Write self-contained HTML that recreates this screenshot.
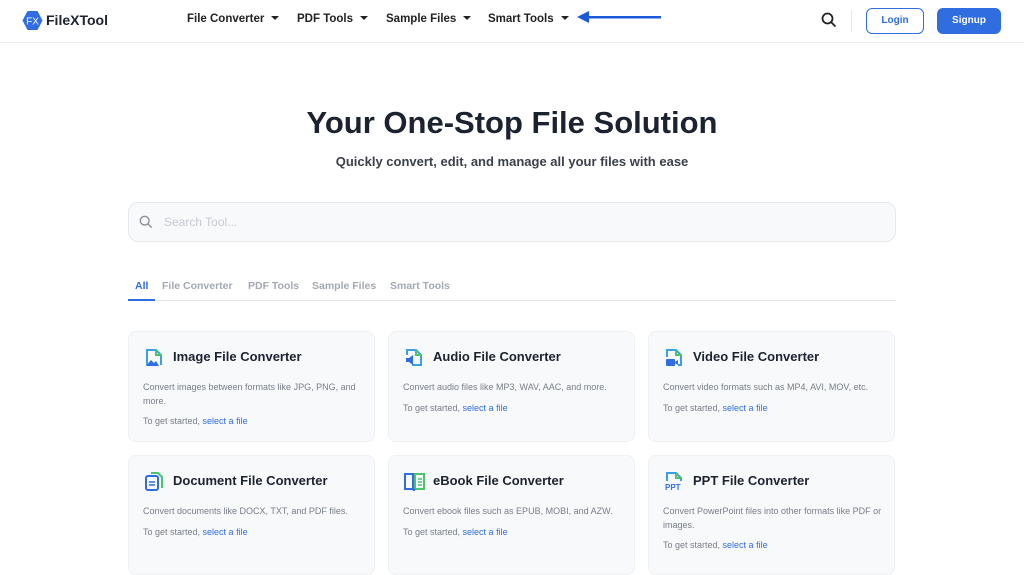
<!DOCTYPE html>
<html><head><meta charset="utf-8"><style>
*{box-sizing:border-box;margin:0;padding:0}
body{width:1024px;height:570px;overflow:hidden;background:#fff;font-family:"Liberation Sans",sans-serif;color:#1d2230;position:relative}
.hdr{position:absolute;left:0;top:0;width:1024px;height:43px;border-bottom:1px solid #eceef2}
.abs{position:absolute}
.nav{font-size:11.5px;font-weight:bold;color:#222;top:13px}
.nav:after{content:"";display:inline-block;margin-left:7px;border-left:4px solid transparent;border-right:4px solid transparent;border-top:4px solid #222;vertical-align:2px}
.card{position:absolute;width:247px;background:#f8f9fb;border:1px solid #eef0f3;border-radius:8px}
.card h3{position:absolute;left:44px;top:17px;font-size:13px;font-weight:bold;color:#1d2230}
.card .ic{position:absolute;left:15px;top:15px}
.card p{position:absolute;left:14px;top:49px;width:225px;font-size:9px;line-height:13.5px;color:#777d88}
.card .gs{position:absolute;left:14px;font-size:9px;color:#777d88}
.card .gs span{color:#2f6de1}
.tab{position:absolute;top:280px;font-size:10.5px;font-weight:bold;color:#a3a8b2}
</style></head><body>
<div class="hdr"></div>
<svg class="abs" style="left:22px;top:10px" width="21" height="21" viewBox="0 0 21 21"><polygon points="5.5,1 15.5,1 20.5,10.5 15.5,20 5.5,20 0.5,10.5" fill="#2f6de1"/><text x="10.5" y="14.5" font-size="10" fill="#fff" text-anchor="middle" font-family="Liberation Sans">FX</text></svg>
<div class="abs" style="left:46px;top:12px;font-size:14px;font-weight:bold;color:#1d2230">FileXTool</div>
<div class="abs nav" style="left:187px">File Converter</div>
<div class="abs nav" style="left:297px">PDF Tools</div>
<div class="abs nav" style="left:386px">Sample Files</div>
<div class="abs nav" style="left:488px">Smart Tools</div>
<svg class="abs" style="left:575px;top:9px" width="88" height="18"><polygon points="2,8 14,2 14,14" fill="#1a5ad8"/><rect x="12" y="7" width="74" height="2.5" fill="#1a5ad8"/></svg>
<svg class="abs" style="left:821px;top:12px" width="16" height="16" viewBox="0 0 16 16"><circle cx="6.5" cy="6.5" r="5" fill="none" stroke="#222" stroke-width="1.8"/><line x1="10.2" y1="10.2" x2="14.5" y2="14.5" stroke="#222" stroke-width="1.8"/></svg>
<div class="abs" style="left:851px;top:10px;width:1px;height:22px;background:#e3e5e9"></div>
<div class="abs" style="left:866px;top:8px;width:58px;height:26px;border:1px solid #2f6de1;border-radius:6px;color:#2f6de1;font-size:10px;font-weight:bold;text-align:center;line-height:24px">Login</div>
<div class="abs" style="left:937px;top:8px;width:64px;height:26px;background:#2f6de1;border-radius:6px;color:#fff;font-size:10px;font-weight:bold;text-align:center;line-height:26px">Signup</div>

<div class="abs" style="left:0;width:1024px;top:105px;text-align:center;font-size:31px;font-weight:bold;color:#1d2230">Your One-Stop File Solution</div>
<div class="abs" style="left:0;width:1024px;top:154px;text-align:center;font-size:13px;font-weight:bold;color:#3a3f4a">Quickly convert, edit, and manage all your files with ease</div>

<div class="abs" style="left:128px;top:202px;width:768px;height:40px;background:#f8f9fb;border:1px solid #e6e8ec;border-radius:10px"></div>
<svg class="abs" style="left:139px;top:215px" width="14" height="14" viewBox="0 0 16 16"><circle cx="6.5" cy="6.5" r="5" fill="none" stroke="#8a8f99" stroke-width="1.6"/><line x1="10.2" y1="10.2" x2="14.5" y2="14.5" stroke="#8a8f99" stroke-width="1.6"/></svg>
<div class="abs" style="left:164px;top:215px;font-size:12px;color:#c5c9d0">Search Tool...</div>

<div class="tab" style="left:135px;color:#2f6de1">All</div>
<div class="tab" style="left:162px">File Converter</div>
<div class="tab" style="left:248px">PDF Tools</div>
<div class="tab" style="left:312px">Sample Files</div>
<div class="tab" style="left:390px">Smart Tools</div>
<div class="abs" style="left:128px;top:300px;width:768px;height:1px;background:#e3e5e9"></div>
<div class="abs" style="left:128px;top:299px;width:27px;height:2px;background:#2f6de1"></div>

<div class="card" style="left:128px;top:331px;height:111px">
<svg class="ic" width="20" height="20" viewBox="0 0 20 20"><path d="M3 18V3h9l5 5v10" fill="none" stroke="#3aa0e6" stroke-width="2"/><path d="M12 3v5h5" fill="none" stroke="#4bc46a" stroke-width="2"/><path d="M2 19l5-6 3 3 2-2 3 5z" fill="#2f6de1"/></svg>
<h3>Image File Converter</h3><p>Convert images between formats like JPG, PNG, and more.</p><div class="gs" style="top:84px">To get started, <span>select a file</span></div></div>
<div class="card" style="left:388px;top:331px;height:111px">
<svg class="ic" width="20" height="20" viewBox="0 0 20 20"><path d="M3 8V3h9l5 5v10H8" fill="none" stroke="#3aa0e6" stroke-width="2"/><path d="M12 3v5h5" fill="none" stroke="#4bc46a" stroke-width="2"/><path d="M2 11h3l4-3v10l-4-3H2z" fill="#2f6de1"/></svg>
<h3>Audio File Converter</h3><p>Convert audio files like MP3, WAV, AAC, and more.</p><div class="gs" style="top:71px">To get started, <span>select a file</span></div></div>
<div class="card" style="left:648px;top:331px;height:111px">
<svg class="ic" width="20" height="20" viewBox="0 0 20 20"><path d="M3 10V3h9l5 5v10h-3" fill="none" stroke="#3aa0e6" stroke-width="2"/><path d="M12 3v5h5" fill="none" stroke="#4bc46a" stroke-width="2"/><rect x="2" y="12" width="9" height="7" rx="1" fill="#2f6de1"/><path d="M11 15l3-2v5l-3-2z" fill="#2f6de1"/></svg>
<h3>Video File Converter</h3><p>Convert video formats such as MP4, AVI, MOV, etc.</p><div class="gs" style="top:71px">To get started, <span>select a file</span></div></div>

<div class="card" style="left:128px;top:455px;height:120px">
<svg class="ic" width="20" height="20" viewBox="0 0 20 20"><path d="M7 2h7l4 4v11" fill="none" stroke="#4bc46a" stroke-width="2"/><rect x="2" y="5" width="12" height="14" rx="2" fill="none" stroke="#2f6de1" stroke-width="2"/><path d="M5 11h6M5 14h6" stroke="#2f6de1" stroke-width="1.6"/></svg>
<h3>Document File Converter</h3><p>Convert documents like DOCX, TXT, and PDF files.</p><div class="gs" style="top:71px">To get started, <span>select a file</span></div></div>
<div class="card" style="left:388px;top:455px;height:120px">
<svg class="ic" width="22" height="20" viewBox="0 0 22 20"><path d="M1 3h8v15H1z" fill="none" stroke="#2f6de1" stroke-width="2"/><path d="M11 3h9v15h-9z" fill="none" stroke="#4bc46a" stroke-width="2"/><path d="M14 8h4M14 11h4M14 14h4" stroke="#4bc46a" stroke-width="1.5"/><path d="M9 18l1 2 1-2" stroke="#2f6de1" stroke-width="1.5" fill="none"/></svg>
<h3>eBook File Converter</h3><p>Convert ebook files such as EPUB, MOBI, and AZW.</p><div class="gs" style="top:71px">To get started, <span>select a file</span></div></div>
<div class="card" style="left:648px;top:455px;height:120px">
<svg class="ic" width="22" height="20" viewBox="0 0 22 20"><path d="M3 10V2h9l5 5v3" fill="none" stroke="#3aa0e6" stroke-width="2"/><path d="M12 2v5h5" fill="none" stroke="#4bc46a" stroke-width="2"/><text x="1" y="19" font-size="8" font-weight="bold" fill="#2f6de1" font-family="Liberation Sans">PPT</text></svg>
<h3>PPT File Converter</h3><p>Convert PowerPoint files into other formats like PDF or images.</p><div class="gs" style="top:84px">To get started, <span>select a file</span></div></div>
</body></html>
